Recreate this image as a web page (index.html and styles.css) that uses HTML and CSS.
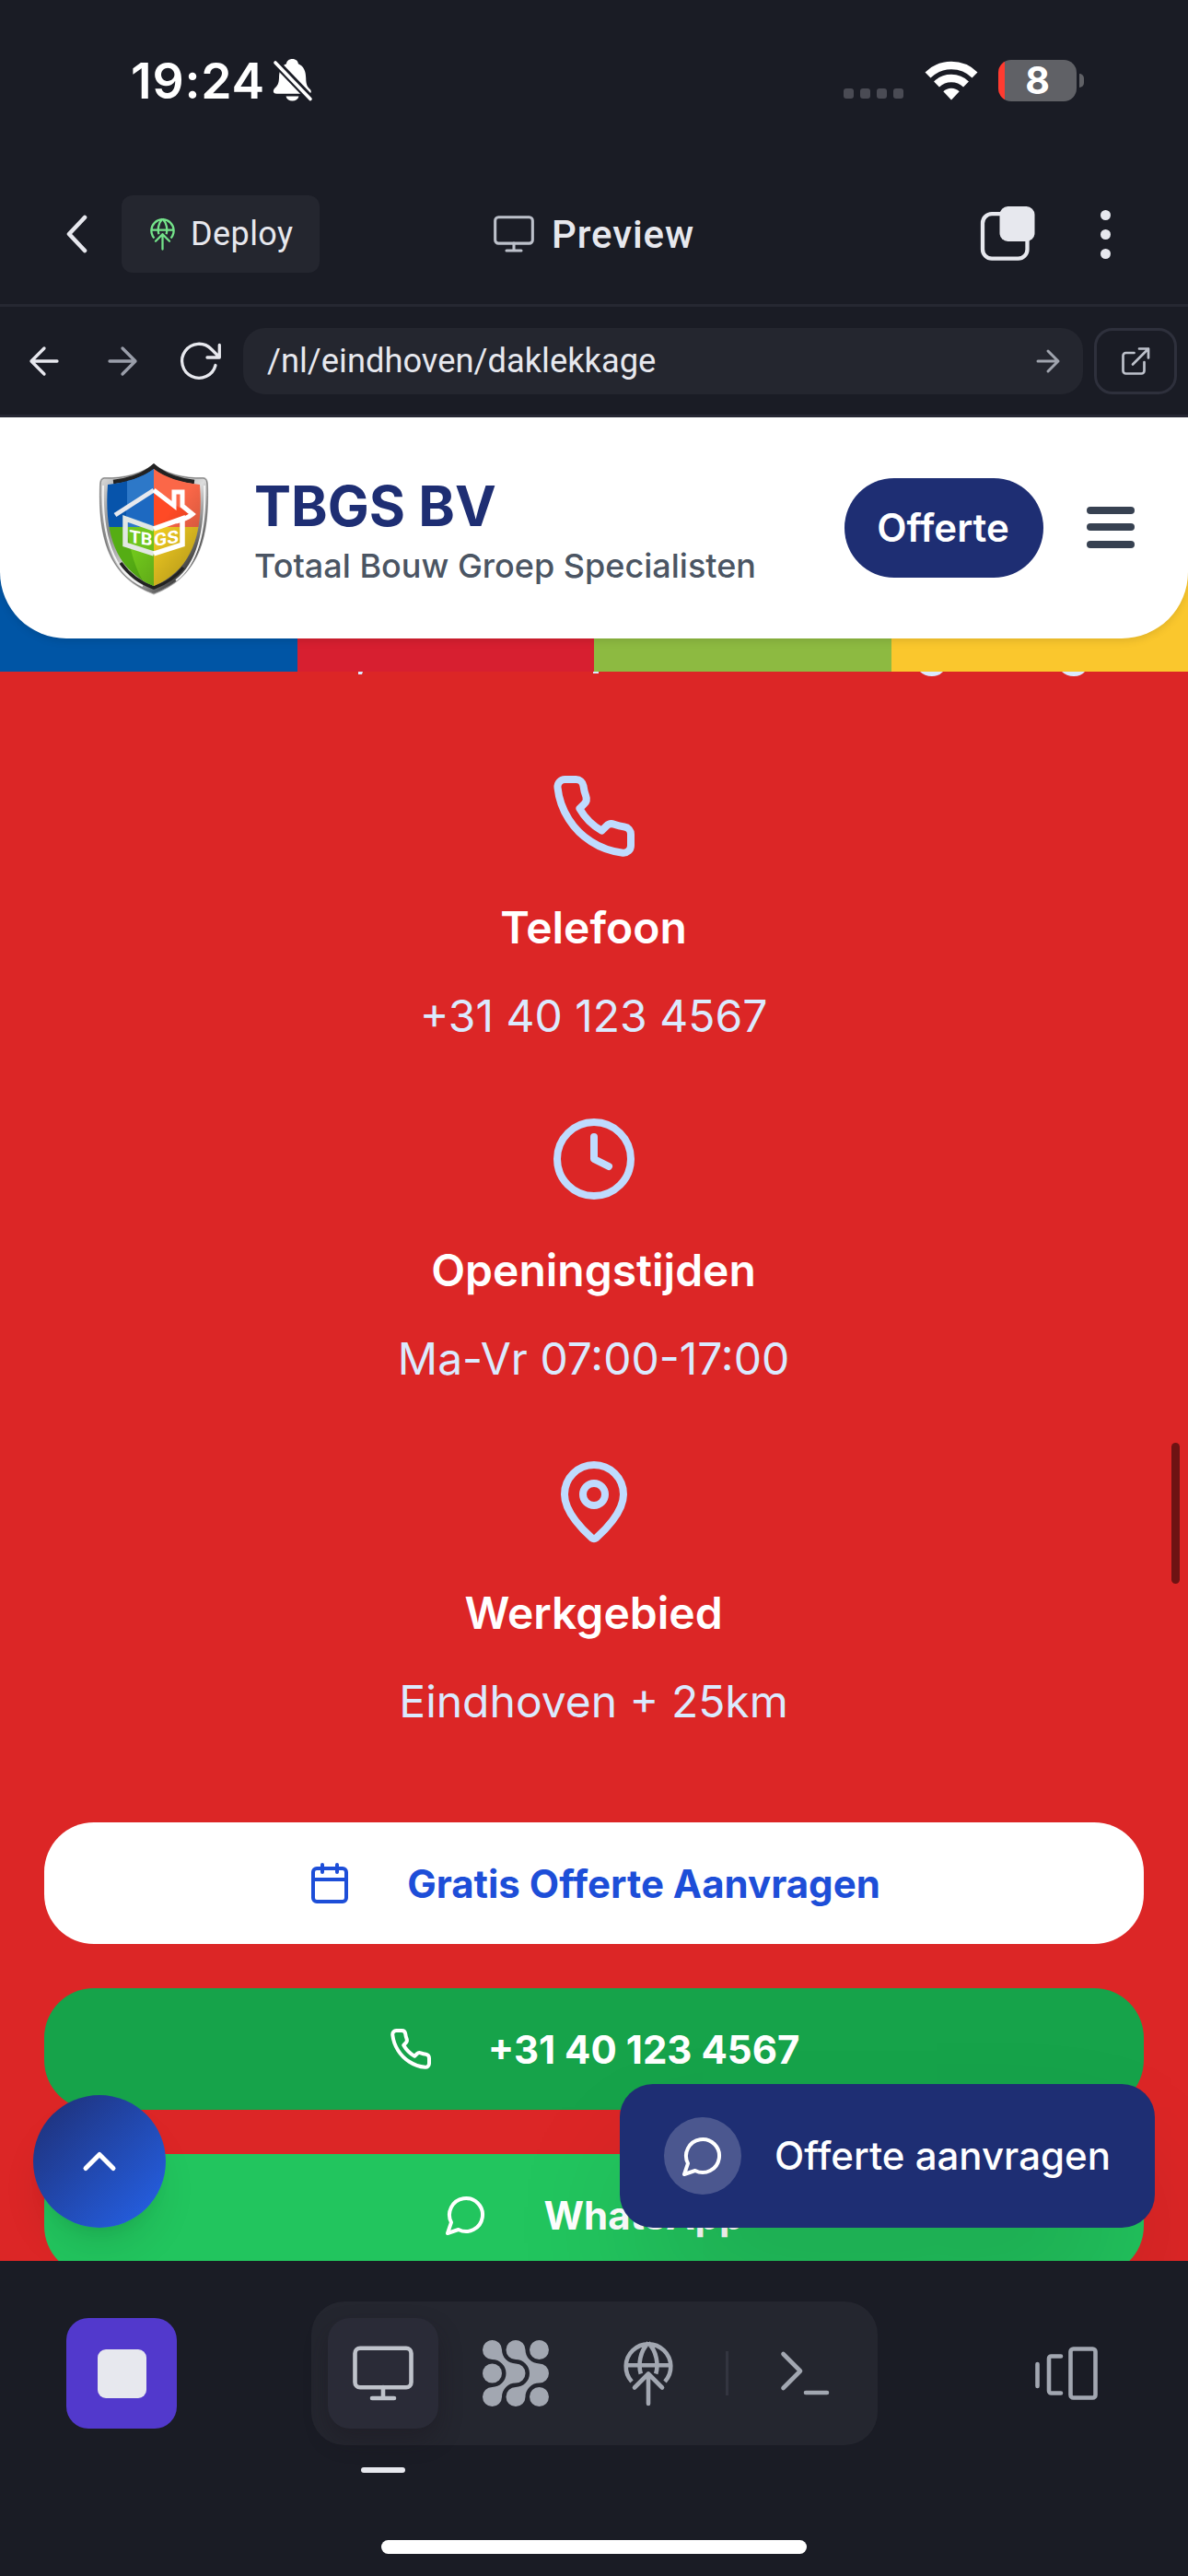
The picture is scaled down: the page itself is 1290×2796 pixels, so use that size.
FILE: index.html
```html
<!DOCTYPE html>
<html lang="nl">
<head>
<meta charset="utf-8">
<title>TBGS BV – Preview</title>
<link rel="stylesheet" href="styles.css">
</head>
<body>
<svg class="defs" aria-hidden="true">
  <symbol id="publish" viewBox="0 0 54 72"><g fill="none" stroke="currentColor" stroke-width="4.6"><path d="M9 45A24.3 24.3 0 1 1 45 45M2.7 27.3H51.3M18.8 36.5C15.8 26 18 12 27 3M35.2 36.5C38.2 26 36 12 27 3"/><path stroke-linecap="round" stroke-linejoin="round" d="M27 69V36.500M12 51.500 27 36.500 42 51.500"/></g></symbol>
  <symbol id="monitor" viewBox="0 0 66 60"><g fill="none" stroke="currentColor" stroke-width="4.600" stroke-linecap="round" stroke-linejoin="round"><rect x="2.500" y="2.700" width="61" height="42.500" rx="5.500"/><path d="M33 45V57M21 57H45"/></g></symbol>
  <symbol id="phone" viewBox="0 0 24 24"><path fill="none" stroke="currentColor" stroke-width="2" stroke-linecap="round" stroke-linejoin="round" d="M22 16.920v3a2 2 0 0 1-2.180 2 19.790 19.790 0 0 1-8.630-3.070 19.500 19.500 0 0 1-6-6 19.790 19.790 0 0 1-3.070-8.670A2 2 0 0 1 4.110 2h3a2 2 0 0 1 2 1.720 12.840 12.840 0 0 0 .7 2.810 2 2 0 0 1-.45 2.110L8.090 9.910a16 16 0 0 0 6 6l1.270-1.270a2 2 0 0 1 2.110-.45 12.840 12.840 0 0 0 2.810.7A2 2 0 0 1 22 16.920z"/></symbol>
  <symbol id="message" viewBox="0 0 24 24"><path fill="none" stroke="currentColor" stroke-width="2" stroke-linecap="round" stroke-linejoin="round" d="M7.900 20A9 9 0 1 0 4 16.100L2 22Z"/></symbol>
</svg>

<div class="screen">
  <div class="status">
    <div class="status-left">
      <span class="time">19:24</span>
      <svg class="bell" viewBox="0 0 42 46"><path fill="#fff" d="M20.500 0c3.800 0 6.200 2.300 6.400 5.200 6.300 2.700 8.200 8.600 8.300 15.500.1 7 1.500 9.500 4.300 12 2.200 2 1.600 5-1.500 5H3.500c-4.200 0-4.500-3.600-2.200-6 3-3 4.500-4.800 4.700-11.500C6.200 12.500 8 7.800 14 5.200 14.300 2.200 16.800 0 20.500 0zM13.500 40.500h14c-.8 3.300-3.600 5-7 5s-6.200-1.700-7-5z"/><path d="M2.500 4 40 43" stroke="#1a1c25" stroke-width="8.500"/><path d="M2 4 40 43.500" stroke="#fff" stroke-width="3.600" stroke-linecap="round"/></svg>
    </div>
    <div class="status-right">
      <div class="signal"><i></i><i></i><i></i><i></i></div>
      <svg class="wifi" viewBox="0 0 58 43"><g fill="none" stroke="#fff" stroke-width="8.500"><path d="M3.500 15.500A36.500 36.500 0 0 1 54.500 15.500"/><path d="M13 25.500A23 23 0 0 1 45 25.500"/></g><path fill="#fff" d="M29 42.500 20.300 33.300a12.500 12.500 0 0 1 17.400 0z"/></svg>
      <div class="battery"><span>8</span></div><i class="battery-tip"></i>
    </div>
  </div>

  <div class="nav">
    <div class="nav-left">
      <svg class="chev" viewBox="0 0 24 42"><path d="M21 3 4 21 21 39" fill="none" stroke="#e7e8ee" stroke-width="4.600" stroke-linecap="round" stroke-linejoin="round"/></svg>
      <div class="deploy"><svg><use href="#publish"/></svg><span>Deploy</span></div>
    </div>
    <div class="nav-title"><svg><use href="#monitor"/></svg><span>Preview</span></div>
    <div class="nav-right">
      <svg class="tabs" viewBox="0 0 60 60"><rect x="3" y="8.200" width="48.500" height="48.500" rx="10" fill="none" stroke="#e7e8ee" stroke-width="4.300"/><rect x="21.500" y="0" width="38" height="38" rx="9" fill="#e7e8ee"/></svg>
      <div class="kebab"><i></i><i></i><i></i></div>
    </div>
  </div>

  <div class="address">
    <svg class="arrow" viewBox="0 0 32 32"><path d="M30 16H2M16 2 2 16 16 30"/></svg>
    <svg class="arrow dim" viewBox="0 0 32 32"><path d="M2 16H30M16 2 30 16 16 30"/></svg>
    <svg class="reload" viewBox="0 0 44 42"><path d="M38 25.500A18.500 18.500 0 1 1 33.500 8L42 16.500M42.300 3.500V17H29"/></svg>
    <div class="url"><span>/nl/eindhoven/daklekkage</span><svg viewBox="0 0 24 24"><path d="M1 12H23M12 1 23 12 12 23"/></svg></div>
    <div class="open"><svg viewBox="0 0 30 30"><path d="M13.500 6H4.500A3 3 0 0 0 1.500 9V25.500A3 3 0 0 0 4.500 28.500H21.500A3 3 0 0 0 24.500 25.500V16M19 1.500H29V11.500M29 1.500 12 18.500"/></svg></div>
  </div>

  <div class="page">
    <div class="stripes">
      <header class="site-header">
        <svg class="logo" viewBox="0 0 120 144">
          <defs>
            <linearGradient id="rim" x1="0" y1="0" x2="1" y2="1"><stop offset="0" stop-color="#eee"/><stop offset=".3" stop-color="#888"/><stop offset=".55" stop-color="#ddd"/><stop offset=".8" stop-color="#444"/><stop offset="1" stop-color="#999"/></linearGradient>
            <linearGradient id="shade" x1="0" y1="0" x2="1" y2="1"><stop offset=".5" stop-opacity="0"/><stop offset="1" stop-opacity=".35"/></linearGradient>
            <clipPath id="field"><path d="M60 6C72 15 90 21 110 23C114 75 102 116 60 133C18 116 6 75 10 23C30 21 48 15 60 6Z"/></clipPath>
          </defs>
          <path fill="#bbb" d="M60 0C72 10 92 16 115 15Q119 16 119 23C121 80 110 124 60 142.500C10 124 -1 80 1 23Q1 16 5 15C28 16 48 10 60 0Z"/>
          <path fill="url(#rim)" stroke="#777" d="M60 1C72 11 92 17 114 16Q118 17 118 24C120 80 109 123 60 141C11 123 0 80 2 24Q2 17 6 16C28 17 48 11 60 1Z"/>
          <path fill="none" stroke="#f3f3f3" stroke-width="2" d="M5 24C3 78 16 118 48 133M115 24C117 78 106 110 84 127"/>
          <path fill="none" stroke="#222" stroke-width="4.500" d="M16 20C34 18 50 12 60 3C70 12 86 18 104 20"/>
          <path fill="none" stroke="#222" stroke-width="3.500" d="M24 108C34 122 46 130 60 135C74 130 84 123 92 113"/>
          <g clip-path="url(#field)">
            <path fill="#0754ab" d="M0 0H60V69H0z"/><path fill="#2d78c8" d="M31 0H60V69H31z"/>
            <path fill="#fb6748" d="M60 0H120V69H60z"/><path fill="#55ad14" d="M0 69H60V144H0z"/>
            <path fill="#f2cc22" d="M60 69H120V144H60z"/><path fill="#70c61c" d="M31 69H60V144Q36 118 31 69z"/>
            <path fill="#1d69c1" d="M60 31V67L30 57V48z"/><path fill="#ff4a25" d="M60 31 101 56 60 67z"/>
            <path fill="url(#shade)" d="M0 0H120V144H0z"/>
          </g>
          <path fill="none" stroke="#e7e9ee" stroke-width="5" d="M18 56 60 29"/>
          <path fill="none" stroke="#fff" stroke-width="5" d="M60 29 82 46V31H91V46L102 55Q96 60 84 63"/>
          <path fill="none" stroke="#e2e7e4" stroke-width="5.500" d="M60 71 29 60V88L60 98"/>
          <path fill="none" stroke="#fff" stroke-width="5.500" d="M60 71 91 60V88L60 98"/>
          <g class="logo-text"><text transform="matrix(1 .16 0 1 33.500 85.500)" textLength="25" lengthAdjust="spacingAndGlyphs">TB</text><text transform="matrix(1 -.16 0 1 60 90)" textLength="27" lengthAdjust="spacingAndGlyphs">GS</text></g>
        </svg>
        <div class="brand"><div class="brand-name">TBGS BV</div><div class="brand-sub">Totaal Bouw Groep Specialisten</div></div>
        <div class="cta">Offerte</div>
        <div class="burger"><i></i><i></i><i></i></div>
      </header>
    </div>

    <main class="contact">
      <svg class="descenders" viewBox="0 0 1290 6" fill="#dbeafe"><path d="M389 0h5l-1 3h-4zM644 0h6v2h-6zM999 0h25q-4 5-12 5t-13-5zM1153 0h25q-4 5-12 5t-13-5z"/></svg>
      <section class="item"><svg><use href="#phone"/></svg><h3>Telefoon</h3><p>+31 40 123 4567</p></section>
      <section class="item"><svg viewBox="0 0 24 24" class="line"><circle cx="12" cy="12" r="10"/><path d="M12 6v6l4 2"/></svg><h3>Openingstijden</h3><p>Ma-Vr 07:00-17:00</p></section>
      <section class="item"><svg viewBox="0 0 24 24" class="line"><path d="M20 10c0 4.993-5.539 10.193-7.399 11.799a1 1 0 0 1-1.202 0C9.539 20.193 4 14.993 4 10a8 8 0 0 1 16 0"/><circle cx="12" cy="10" r="3"/></svg><h3>Werkgebied</h3><p>Eindhoven + 25km</p></section>
      <div class="actions">
        <div class="btn quote"><svg viewBox="0 0 24 24" class="line"><path d="M8 2v4M16 2v4M3 10h18"/><rect x="3" y="4" width="18" height="18" rx="2"/></svg><span>Gratis Offerte Aanvragen</span></div>
        <div class="btn call"><svg><use href="#phone"/></svg><span>+31 40 123 4567</span></div>
        <div class="btn whatsapp"><svg><use href="#message"/></svg><span>WhatsApp</span></div>
      </div>
    </main>
    <div class="to-top"><svg viewBox="0 0 24 24" class="line"><path d="m18 15-6-6-6 6"/></svg></div>
    <div class="chat"><div class="chat-icon"><svg><use href="#message"/></svg></div><span>Offerte aanvragen</span></div>
    <div class="thumb"></div>
  </div>

  <footer class="toolbar">
    <div class="tools">
      <div class="stop"><i></i></div>
      <div class="dock">
        <div class="tool active"><svg width="66" height="60"><use href="#monitor"/></svg></div>
        <div class="tool"><svg width="72" height="72" viewBox="0 0 72 72" fill="currentColor"><path id="wave" d="M10.500 0A10.500 10.500 0 0 0 10.500 21A15 15 0 0 1 10.500 51A10.500 10.500 0 1 0 21 61.500A15 15 0 0 1 36 46.500A10.500 10.500 0 0 0 36 25.500A15 15 0 0 1 21 10.500A10.500 10.500 0 0 0 10.500 0Z"/><use href="#wave" x="25.500"/><circle cx="61.500" cy="10.500" r="10.500"/><circle cx="10.500" cy="36" r="10.500"/><circle cx="61.500" cy="61.500" r="10.500"/></svg></div>
        <div class="tool"><svg width="54" height="72"><use href="#publish"/></svg></div>
        <i class="sep"></i>
        <div class="tool"><svg class="term" width="54" height="48" viewBox="0 0 54 48"><path d="M3.500 3 22 21.500 3.500 40M28 45H51"/></svg></div>
      </div>
      <svg class="devices" viewBox="0 0 70 60"><path d="M3.500 20V44M29 11.500H18.500A2.500 2.500 0 0 0 16 14V49A2.500 2.500 0 0 0 18.500 51.500H29"/><rect x="39.500" y="3.500" width="27" height="53" rx="3"/></svg>
    </div>
    <div class="indicator"></div>
    <div class="home"></div>
  </footer>
</div>
</body>
</html>
```
FILE: styles.css
```css
* { box-sizing: border-box; }
body { margin: 0; background: #1a1c25; font-family: Inter, sans-serif; }
h3, p { margin: 0; }
i { display: block; }
svg { display: block; flex: none; overflow: visible; }
span { white-space: nowrap; }
.defs { position: absolute; width: 0; height: 0; }
.screen { width: 1290px; height: 2796px; overflow: hidden; display: flex; flex-direction: column; background: #1a1c25; }

.status { height: 178px; padding: 0 113px 4px 142px; display: flex; justify-content: space-between; align-items: center; color: #fff; }
.status-left, .status-right { display: flex; align-items: center; }
.time { width: 155px; padding-top: 1px; font-size: 53.5px; font-weight: 560; letter-spacing: .8px; line-height: 60px; }
.bell { width: 42px; height: 46px; }
.signal { display: flex; gap: 7px; padding-top: 29px; margin-right: 23px; }
.signal i { width: 11px; height: 11px; border-radius: 3px; background: #4a4b54; }
.wifi { width: 58px; height: 43px; margin-right: 22px; }
.battery { width: 85px; height: 45px; border-radius: 14px; background: linear-gradient(90deg, #ff3b30 7px, #606166 7px); text-align: center; font-size: 41px; font-weight: 700; line-height: 45px; }
.battery-tip { width: 5px; height: 15px; margin-left: 3px; border-radius: 0 5px 5px 0; background: #606166; }

.nav { height: 155px; padding: 0 71px; border-bottom: 3px solid #262832; display: grid; grid-template-columns: 1fr auto 1fr; align-items: center; color: #e7e8ee; font-family: Roboto, sans-serif; }
.nav-left { display: flex; align-items: center; }
.chev { width: 24px; height: 42px; margin-right: 37px; }
.deploy { width: 215px; height: 84px; border-radius: 12px; background: #24262f; display: flex; align-items: center; padding-left: 31px; font-size: 36px; letter-spacing: .4px; }
.deploy svg { width: 27px; height: 36px; margin-right: 17px; color: #74e38a; }
.nav-title { display: flex; align-items: center; font-size: 42px; font-weight: 500; letter-spacing: .9px; }
.nav-title svg { width: 44px; height: 40px; margin-right: 19px; color: #bdc1cb; }
.nav-right { display: flex; justify-content: flex-end; align-items: center; }
.tabs { width: 60px; height: 60px; margin-right: 71px; }
.kebab { display: flex; flex-direction: column; gap: 10px; margin-right: 13px; }
.kebab i { width: 11px; height: 11px; border-radius: 50%; background: #e7e8ee; }

.address { height: 120px; padding: 0 12px 0 32px; border-bottom: 3px solid #262733; display: flex; align-items: center; font-family: Roboto, sans-serif; color: #e7e8ee; }
.address svg { fill: none; stroke: currentColor; stroke-width: 3.3; stroke-linecap: round; stroke-linejoin: round; }
.arrow { width: 32px; height: 32px; margin-right: 53px; }
.dim { color: #9a9eaa; margin-right: 47px; }
.address .reload { width: 44px; height: 42px; margin-right: 24px; }
.url { flex: 1; height: 72px; border-radius: 24px; background: #24262f; display: flex; align-items: center; justify-content: space-between; padding: 0 26px; font-size: 36.3px; }
.url svg { width: 24px; height: 24px; color: #a0a4ae; stroke-width: 3; }
.open { width: 90px; height: 72px; margin-left: 12px; border: 3px solid #2e303c; border-radius: 20px; display: grid; place-items: center; color: #bdc1cb; }
.open svg { width: 30px; height: 30px; stroke-width: 2.7; }

.page { position: relative; height: 2001px; overflow: hidden; background: #dc2626; }
.stripes { height: 276px; background: linear-gradient(90deg, #0055a5 323px, #d71f30 323px 645px, #8dba41 645px 968px, #fac72d 968px); }
.site-header { height: 240px; border-radius: 0 0 72px 72px; background: #fff; box-shadow: 0 3px 9px rgba(0,0,0,.1); display: flex; align-items: center; padding: 0 58px 0 107px; }
.logo { width: 120px; height: 144px; margin: 4px 49px 0 0; }
.logo-text { fill: #fff; font: 700 19px Roboto, sans-serif; }
.brand { flex: 1; padding-top: 6px; }
.brand-name { font-size: 60px; font-weight: 700; line-height: 75px; color: #1e2e73; white-space: nowrap; }
.brand-sub { font-size: 36px; font-weight: 500; line-height: 54px; color: #4b5563; white-space: nowrap; }
.cta { width: 216px; height: 108px; border-radius: 54px; background: #1e2e73; color: #fff; font-size: 42px; font-weight: 600; line-height: 108px; text-align: center; margin-right: 47px; padding-right: 2px; }
.burger { width: 52px; display: flex; flex-direction: column; gap: 10.5px; margin-top: -2px; }
.burger i { height: 8px; border-radius: 4px; background: #374151; }

.contact { display: flex; flex-direction: column; gap: 71px; padding: 109px 48px 0; position: relative; }
.descenders { position: absolute; left: 0; top: 0; width: 1290px; height: 6px; }
.line { fill: none; stroke: currentColor; stroke-width: 2; stroke-linecap: round; stroke-linejoin: round; }
.item { display: flex; flex-direction: column; align-items: center; font-size: 48px; line-height: 72px; }
.item svg { width: 96px; height: 96px; margin-bottom: 37px; color: #bfdbfe; }
.item h3 { font-size: 48px; font-weight: 600; color: #fff; margin-bottom: 24px; padding-right: 1px; }
.item p { color: #dbeafe; padding-right: 1px; }
.actions { display: flex; flex-direction: column; gap: 48px; margin-top: 24px; }
.btn { height: 132px; border-radius: 54px; display: flex; align-items: center; justify-content: center; gap: 60px; font-size: 42px; font-weight: 700; color: #fff; }
.btn svg { width: 48px; height: 48px; }
.quote { background: #fff; color: #1d4ed8; }
.call { background: #16a34a; }
.whatsapp { background: #22c55e; }
.to-top { position: absolute; left: 36px; bottom: 36px; width: 144px; height: 144px; border-radius: 50%; background: linear-gradient(135deg, #1e2e73, #2563eb); box-shadow: 0 30px 45px -9px rgba(0,0,0,.1), 0 12px 18px -12px rgba(0,0,0,.1); color: #fff; display: grid; place-items: center; }
.to-top svg { width: 60px; height: 60px; }
.chat { position: absolute; right: 36px; bottom: 36px; width: 581px; height: 156px; border-radius: 36px; background: #1e2e73; box-shadow: 0 75px 150px -36px rgba(0,0,0,.25); color: #fff; display: flex; align-items: center; padding-left: 48px; font-size: 42px; font-weight: 500; }
.chat span { padding-bottom: 2px; }
.chat-icon { width: 84px; height: 84px; border-radius: 50%; background: rgba(255,255,255,.2); display: grid; place-items: center; margin-right: 36px; }
.chat-icon svg { width: 48px; height: 48px; }
.thumb { position: absolute; right: 9px; top: 1113px; width: 9px; height: 153px; border-radius: 5px; background: #6e1313; }

.toolbar { flex: 1; padding-top: 44px; color: #a2a7b1; }
.tools { display: flex; align-items: center; height: 156px; padding: 0 97px 0 72px; }
.stop { width: 120px; height: 120px; border-radius: 24px; background: #5239cc; display: grid; place-items: center; }
.stop i { width: 53px; height: 53px; border-radius: 9px; background: #e7e8ee; }
.dock { width: 615px; height: 156px; margin-left: 146px; border-radius: 36px; background: #24262f; display: flex; align-items: center; padding-left: 18px; }
.tool { width: 120px; height: 120px; margin-right: 24px; border-radius: 24px; display: grid; place-items: center; }
.active { background: #2a2b37; color: #bfc3cb; box-shadow: 0 12px 24px rgba(27,20,30,.35); }
.sep { width: 3px; height: 48px; margin: 0 23px 0 0; background: #333540; }
.tool, .sep { flex: none; }
.term, .devices { fill: none; stroke: currentColor; stroke-width: 4.6; stroke-linecap: round; stroke-linejoin: round; }
.devices { width: 70px; height: 60px; margin-left: auto; }
.indicator { width: 48px; height: 6px; margin: 24px 0 73px 392px; border-radius: 3px; background: #e7e8ee; }
.home { width: 462px; height: 15px; margin: 0 auto; border-radius: 8px; background: #fff; }
```
